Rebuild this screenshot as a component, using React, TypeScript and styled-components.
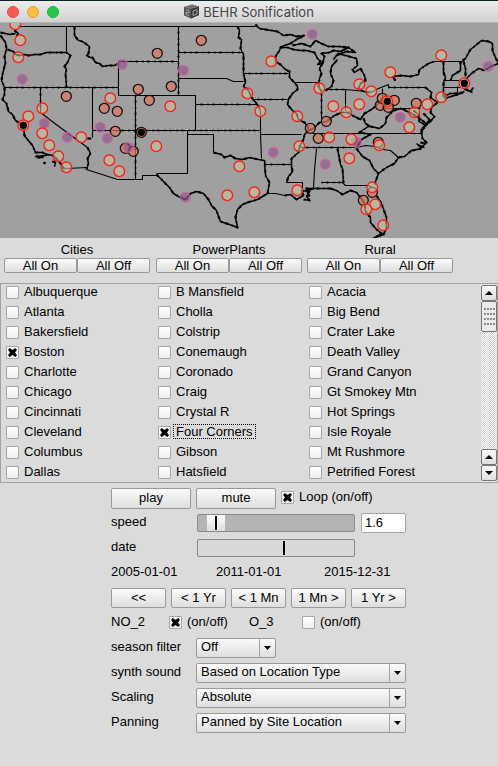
import React, { useState } from "react";
import styled, { createGlobalStyle, css } from "styled-components";

const GlobalStyle = createGlobalStyle`
  * { box-sizing: border-box; }
  body {
    margin: 0;
    background: #dbdbdb;
    color: #000;
    font: 13px/17px "Liberation Sans", Arial, sans-serif;
  }
  button, input, select { font: inherit; color: inherit; margin: 0; padding: 0; }
`;

const raised = css`
  border: 1px solid #999;
  border-radius: 2px;
  background: linear-gradient(#fbfbfb, #dedede);
`;

const Window = styled.main`
  min-height: 100vh;
  background: #dbdbdb;
`;

const TitleBar = styled.header`
  display: grid;
  grid-template-columns: 1fr auto 1fr;
  align-items: center;
  height: 23px;
  padding: 0 7px;
  background: linear-gradient(#ededed, #d2d2d2);
  border-top: 1px solid #0b2326;
  border-bottom: 1px solid #b4b4b4;
`;

const Lights = styled.div`
  display: flex;
  gap: 8px;
`;

const Light = styled.button<{ $fill: string; $edge: string }>`
  width: 12px;
  height: 12px;
  border: 1px solid ${(p) => p.$edge};
  border-radius: 50%;
  background: ${(p) => p.$fill};
`;

const Title = styled.h1`
  display: flex;
  align-items: center;
  gap: 4px;
  margin: 0;
  font: 13px/20px Inter, "Liberation Sans", sans-serif;
  color: #444;
`;

const MapView = styled.svg`
  display: block;
  width: 100%;
  background: #a0a0a0;
`;

const columns = css`
  display: grid;
  grid-template-columns: 152px 151px 1fr;
`;

const GroupBar = styled.section`
  ${columns}
  padding: 4px 0 10px 4px;
`;

const Group = styled.div`
  width: 146px;
`;

const GroupName = styled.h2`
  margin: 0;
  font-size: 13px;
  font-weight: 400;
  line-height: 16px;
  text-align: center;
`;

const GroupButtons = styled.div`
  display: grid;
  grid-template-columns: 1fr 1fr;
`;

const SmallButton = styled.button`
  ${raised}
  height: 15px;
  line-height: 11px;
  padding-bottom: 1px;
`;

const Panel = styled.section`
  display: flex;
  height: 200px;
  border: 1px solid #a2a2a2;
  overflow: hidden;
`;

const Places = styled.div`
  ${columns}
  flex: 1;
  padding-left: 5px;
`;

const CheckLabel = styled.label`
  display: flex;
  gap: 2px;
  align-items: flex-start;
  height: 20px;
  line-height: 15px;
`;

const CheckText = styled.span<{ $focused?: boolean }>`
  padding: 0 3px;
  white-space: nowrap;
  outline: ${(p) => (p.$focused ? "1px dotted #000" : "none")};
  outline-offset: -1px;
`;

const Tick = styled.input.attrs({ type: "checkbox" })`
  appearance: none;
  display: grid;
  place-items: center;
  flex: none;
  width: 13px;
  height: 13px;
  margin-top: 2px;
  border: 1px solid #a6a6a6;
  border-radius: 1px;
  background: linear-gradient(#fff, #eee);
  &:checked::before {
    content: "";
    width: 9px;
    height: 9px;
    background: #000;
    clip-path: polygon(0 20%, 20% 0, 50% 22%, 80% 0, 100% 20%, 78% 50%, 100% 80%, 80% 100%, 50% 78%, 20% 100%, 0 80%, 22% 50%);
  }
`;

const ScrollBar = styled.div`
  display: flex;
  flex-direction: column;
  width: 16px;
  padding: 1px 0;
  background: repeating-conic-gradient(#fff 0 25%, #d2d2d2 0 50%) 0 0 / 2px 2px;
`;

const ScrollButton = styled.button`
  ${raised}
  display: grid;
  place-items: center;
  height: 16px;
  border-color: #777;
`;

const Grip = styled.div`
  height: 31px;
  margin-bottom: auto;
  padding: 5px 1px 5px 2px;
  border: 1px solid #777;
  border-radius: 2px;
  background: radial-gradient(circle at 1px 1px, #8c8c8c 1px, transparent 1px) 0 1px / 3px 5px content-box, #eaeaea;
`;

const Controls = styled.section`
  display: grid;
  gap: 5px;
  padding: 5px 0 33px 111px;
  max-width: 406px;
`;

const Row = styled.div<{ $cols: string; $gap?: number }>`
  display: grid;
  grid-template-columns: ${(p) => p.$cols};
  column-gap: ${(p) => p.$gap ?? 0}px;
  height: 20px;
`;

const PushButton = styled.button`
  ${raised}
  line-height: 15px;
  padding-bottom: 2px;
`;

const Slider = styled.input.attrs({ type: "range" })<{ $flat?: boolean }>`
  appearance: none;
  width: 158px;
  height: 18px;
  margin: 1px;
  border: 1px solid #8a8a8a;
  border-radius: 2px;
  background: ${(p) => (p.$flat ? "#d8d8d8" : "#b4b4b4")};
  &::-webkit-slider-thumb {
    appearance: none;
    width: ${(p) => (p.$flat ? 2 : 18)}px;
    height: ${(p) => (p.$flat ? 14 : 16)}px;
    background: ${(p) =>
      p.$flat ? "#000" : "linear-gradient(#000, #000) center / 2px 14px no-repeat, linear-gradient(#fff, #dedede)"};
  }
`;

const NumberBox = styled.input`
  width: 100%;
  height: 20px;
  padding: 0 3px 1px;
  border: 1px solid #a6a6a6;
  border-radius: 2px;
  background: #fff;
`;

const Dates = styled.div`
  display: grid;
  grid-template-columns: 105px 108px 1fr;
  height: 20px;
`;

const SelectBox = styled.span`
  position: relative;
  display: block;
  svg {
    position: absolute;
    right: 0;
    top: 0;
    pointer-events: none;
  }
`;

const Select = styled.select`
  ${raised}
  appearance: none;
  display: block;
  width: 100%;
  height: 20px;
  padding: 0 18px 2px 4px;
  line-height: 16px;
`;

type Pt = [number, number];

const thinLines = [
  "M17 26H255", "M66 26V52", "M40 87V112L57 125L87 147", "M118 61V95H195V130", "M92 87V137", "M135 95V179",
  "M65 168L87 167", "M86 169L117 179H142V175H156", "M156 173H187V130", "M187 134H213V152", "M195 104H257", "M178 26V95",
  "M178 52H242", "M178 78H226L233 81H243", "M260 110V134L261 158", "M260 134H301", "M265 164H290", "M286 182H302V188",
  "M316 148L314 170L313 188", "M300 147H356", "M312 133H421", "M321 182H342L345 185H368L371 187", "M294 82H319",
  "M252 99H287", "M321 92V118", "M326 89H345L365 91", "M345 89V110", "M382 88V108H420", "M388 84V87",
  "M434 61H462", "M443 80H462", "M443 87H460", "M457 86V94", "M356 147L365 145L375 146L382 149L390 150L398 157",
  "M92 130H259", "M268 193L275 193L284 195", "M370 92L378 88L388 84",
  "M4 87H118", "M118 61H178", "M243 73H288", "M388 87H425",
];

const dottedLines = ["M4 87H118", "M118 61H178", "M178 26V95", "M135 95V178", "M178 52H242", "M243 73H288", "M388 87H425", "M92 130H259", "M301 147H355", "M252 99H287", "M40 88V112", "M321 182H343", "M265 164H290", "M330 89H345", "M195 104H257", "M321 94V118"];

const thickLines = [
  "M0 35L5 42L6 48L4 56L5 62L2 74L1 80L4 87L4 94L2 99L6 103L8 111L12 114L15 120L20 123L23 127L24 135L27 139L32 145L35 152L42 152L46 154L53 155L60 163L64 169",
  "M0 32L5 33L9 34L15 33M14 30L18 33L16 35",
  "M7 49L13 51L15 54L19 55L24 54L28 55L34 54L40 54L46 52L66 52L70 55L67 62L64 66L66 69L65 73L66 87",
  "M74 26V35L78 40L82 41L89 46L88 53L86 55L90 57L92 57L95 62L99 63L102 66L108 65L114 65L118 63",
  "M87 138L91 138M87 147L90 153L87 158L88 163L86 169",
  "M156 174L160 178L165 183L169 187L173 193L178 196L185 199L190 193L196 191L203 193L208 199L211 205L216 210L218 216L220 221L229 224L237 227L235 217L237 209L242 204L247 202L257 199L267 193L269 182L265 175L264 160",
  "M213 152L221 154L224 157L230 155L235 158L242 159L249 157L258 159L264 160",
  "M237 26L239 30L238 37L241 39L240 48L243 54L243 73L245 82L243 86L248 90L251 97L257 104L260 110",
  "M255 24L259 28L265 29L271 30L277 31L283 35L290 34L296 36L304 35L296 39L290 43L284 45L280 47L279 50L275 56L275 61L280 64L285 69L289 71L289 77L294 82L297 86L297 89L292 93L288 99L287 104L292 110L296 113L298 119L304 122L308 127L307 131L304 134L303 139L299 146L298 152L291 158L291 166L292 171L288 176L286 182",
  "M280 47L287 47L293 49L300 50L306 50L314 52L317 58L320 61L317 64L322 63L324 56L321 53L329 52L333 50L340 51L348 47L355 52L346 51L336 55L333 59",
  "M292 45L301 43L310 46L315 40L321 43L328 46L338 46L349 47",
  "M322 63L319 68L321 73L319 78L318 86L321 91M325 90L331 86L333 80L330 73L331 66L337 59M337 53L345 55L356 58L357 65L352 69L354 72L360 68L364 75L365 80L360 83L358 88L363 91L370 92",
  "M395 80L392 76L401 75L410 76L418 74L419 69L428 63L434 61",
  "M425 87L431 92L430 97L437 102L431 107L430 112L434 116L428 123",
  "M443 61V72L445 77L443 83V96M460 61L460 70L452 75L450 80M463 61L465 68V76",
  "M462 60L465 58L470 49L475 45L481 40L488 41L492 43L492 50L495 57L498 63L490 66L484 70L478 68L471 73L467 77L465 83L465 89L470 91L473 87",
  "M443 96L450 93L458 93L464 91M444 98L454 95L463 92",
  "M308 130L313 128L319 122L326 121L334 115L341 112L348 112L352 115L360 119L364 113L371 109L376 105L382 98",
  "M363 118L365 123L370 126L379 128L385 123L386 117L393 110L401 108L409 112L416 116L422 120L427 125",
  "M371 134L359 132L369 125M357 146L361 139L370 134",
  "M413 110L418 114L419 121L425 125L420 130M423 113L429 119L426 124L421 131L422 138L426 142L421 147L416 143M412 150L421 148",
  "M421 148L411 150L404 156L398 157L394 163L386 167L378 173L374 184",
  "M356 148L362 156L369 160L373 168L378 173M337 148L340 164L342 168L343 182",
  "M330 188L336 190L342 194L350 190L356 192L360 197L364 203L365 211L370 217L370 222L376 229L381 233L373 238L383 234L386 228L386 217L381 203L376 195",
  "M284 195L290 194L296 199L303 195L301 190L309 191L306 196L309 200L303 199M305 188L309 188L322 188L330 188M313 188L306 190L309 196",
  "M35 156L46 155M37 157H43M43 162L45 163M52 161L55 162L54 166M420 142L426 143M418 145L424 147M464 88L472 92",
];

const cities: Pt[] = [
  [15, 24], [20, 40], [18, 57], [42, 108], [28, 116], [23, 125], [42, 133], [49, 145], [58, 156], [66, 167], [81, 137],
  [110, 98], [109, 160], [119, 171], [156, 146], [170, 106], [239, 166], [227, 195], [254, 192], [297, 190], [299, 146],
  [271, 61], [247, 93], [260, 111], [297, 116], [319, 88], [333, 106], [329, 137], [346, 112], [359, 84], [359, 104],
  [371, 91], [390, 72], [441, 55], [441, 97], [464, 83], [427, 104], [414, 112], [409, 127], [351, 139], [379, 145],
  [349, 158], [372, 187], [375, 204], [366, 209], [383, 225], [387, 101],
];

const plants: Pt[] = [
  [157, 53], [66, 96], [138, 89], [149, 100], [104, 108], [117, 111], [171, 86], [201, 40], [115, 131], [125, 148],
  [133, 151], [326, 121], [310, 128], [318, 138], [380, 105], [382, 98], [394, 100], [388, 107], [416, 103], [378, 142],
  [372, 192], [363, 200], [141, 132],
];

const rural: Pt[] = [
  [22, 79], [122, 64], [44, 123], [67, 137], [100, 127], [107, 138], [128, 147], [183, 70], [185, 197], [273, 152],
  [325, 164], [312, 34], [488, 66], [400, 117], [356, 142],
];

const active: Pt[] = [[23, 125], [464, 83], [387, 101], [141, 132]];

const Dots = ({ at, r, fill, stroke }: { at: Pt[]; r: number; fill: string; stroke: string }) => (
  <g fill={fill} stroke={stroke} strokeWidth="1.3">
    {at.map(([x, y]) => (
      <circle key={`${x}-${y}`} cx={x + 0.3} cy={y + 0.3} r={r} />
    ))}
  </g>
);

const SiteMap = () => (
  <MapView viewBox="0 23 498 215" role="img" aria-label="Map of sites">
    <g fill="none" stroke="#000" strokeLinejoin="round" transform="translate(.5 .5)">
      <path d={thinLines.join("")} strokeWidth="1.1" />
      <path d={dottedLines.join("")} strokeWidth="2" strokeDasharray="1 4 2 5" />
      <path d={thickLines.join("")} strokeWidth="1.5" />
      <path d={thickLines.join("")} strokeWidth="2.2" strokeDasharray="3 4 1 3" />
    </g>
    <Dots at={plants} r={5} fill="rgba(222,120,98,.68)" stroke="#1a0d0a" />
    <Dots at={rural} r={5} fill="rgba(142,88,146,.68)" stroke="rgba(214,98,152,.8)" />
    <Dots at={cities} r={5.3} fill="rgba(205,198,160,.55)" stroke="#fb1e14" />
    <Dots at={active} r={3} fill="#000" stroke="#000" />
  </MapView>
);

const CubeIcon = () => (
  <svg width="15" height="15" viewBox="0 0 15 15" aria-hidden="true">
    <path d="M0 3L8 .5L15 2.500V11L7 14.500L0 11.500Z" fill="#555" />
    <path d="M0 3L8 .5L15 2.500L7 5Z" fill="#858585" />
    <path d="M7 5L15 2.500V11L7 14.500Z" fill="#3a3a3a" />
    <path d="M2 5.500L5 6.500V9L2 8V10.500L5 11.500M9 7L13 5.500V10L9 11.500Z" fill="none" stroke="#a5a5a5" />
    <path d="M4 3L10 2.500" stroke="#555" />
  </svg>
);

const Arrow = ({ up }: { up?: boolean }) => (
  <svg width="8" height="4" viewBox="0 0 8 4" aria-hidden="true">
    <path d={up ? "M0 4L4 0L8 4Z" : "M0 0H8L4 4Z"} />
  </svg>
);

const Check = ({ label, initial = false, focused }: { label: string; initial?: boolean; focused?: boolean }) => {
  const [on, setOn] = useState(initial);
  return (
    <CheckLabel>
      <Tick checked={on} onChange={() => setOn(!on)} />
      <CheckText $focused={focused}>{label}</CheckText>
    </CheckLabel>
  );
};

const Toggle = styled.div`
  padding-top: 1px;
`;

const Choice = ({ id, options }: { id: string; options: string[] }) => (
  <SelectBox>
    <Select id={id} defaultValue={options[0]}>
      {options.map((o) => (
        <option key={o}>{o}</option>
      ))}
    </Select>
    <svg width="17" height="20" viewBox="0 0 17 20" aria-hidden="true">
      <path d="M.5 1V19" stroke="#a2a2a2" />
      <path d="M5 8H12L8.500 12Z" />
    </svg>
  </SelectBox>
);

const groups = [
  { name: "Cities", places: ["Albuquerque", "Atlanta", "Bakersfield", "Boston", "Charlotte", "Chicago", "Cincinnati", "Cleveland", "Columbus", "Dallas"] },
  { name: "PowerPlants", places: ["B Mansfield", "Cholla", "Colstrip", "Conemaugh", "Coronado", "Craig", "Crystal R", "Four Corners", "Gibson", "Hatsfield"] },
  { name: "Rural", places: ["Acacia", "Big Bend", "Crater Lake", "Death Valley", "Grand Canyon", "Gt Smokey Mtn", "Hot Springs", "Isle Royale", "Mt Rushmore", "Petrified Forest"] },
];

const choices = [
  { id: "synth", label: "synth sound", options: ["Based on Location Type"] },
  { id: "scaling", label: "Scaling", options: ["Absolute"] },
  { id: "panning", label: "Panning", options: ["Panned by Site Location"] },
];

export default function App() {
  return (
    <Window>
      <GlobalStyle />
      <TitleBar>
        <Lights>
          <Light $fill="#fc5b57" $edge="#e24a45" aria-label="Close" />
          <Light $fill="#fdbe41" $edge="#e0a033" aria-label="Minimize" />
          <Light $fill="#27c84a" $edge="#1fac37" aria-label="Zoom" />
        </Lights>
        <Title>
          <CubeIcon />
          BEHR Sonification
        </Title>
      </TitleBar>
      <SiteMap />
      <GroupBar>
        {groups.map((g) => (
          <Group key={g.name}>
            <GroupName>{g.name}</GroupName>
            <GroupButtons>
              <SmallButton>All On</SmallButton>
              <SmallButton>All Off</SmallButton>
            </GroupButtons>
          </Group>
        ))}
      </GroupBar>
      <Panel>
        <Places>
          {groups.map((g) => (
            <div key={g.name}>
              {g.places.map((p) => (
                <Check key={p} label={p} initial={p === "Boston" || p === "Four Corners"} focused={p === "Four Corners"} />
              ))}
            </div>
          ))}
        </Places>
        <ScrollBar>
          <ScrollButton aria-label="Scroll up"><Arrow up /></ScrollButton>
          <Grip />
          <ScrollButton aria-label="Page up"><Arrow up /></ScrollButton>
          <ScrollButton aria-label="Scroll down"><Arrow /></ScrollButton>
        </ScrollBar>
      </Panel>
      <Controls>
        <Row $cols="80px 80px 1fr" $gap={5}>
          <PushButton>play</PushButton>
          <PushButton>mute</PushButton>
          <Toggle><Check label="Loop (on/off)" initial /></Toggle>
        </Row>
        <Row $cols="85px 1fr 45px">
          <label htmlFor="speed">speed</label>
          <Slider id="speed" min={0} max={100} step={0.5} defaultValue={6.5} />
          <NumberBox aria-label="speed value" defaultValue="1.6" />
        </Row>
        <Row $cols="85px 1fr">
          <label htmlFor="date">date</label>
          <Slider id="date" $flat min={0} max={100} defaultValue={55} />
        </Row>
        <Dates>
          <span>2005-01-01</span>
          <span>2011-01-01</span>
          <span>2015-12-31</span>
        </Dates>
        <Row $cols="repeat(5, 1fr)" $gap={5}>
          {["<<", "< 1 Yr", "< 1 Mn", "1 Mn >", "1 Yr >"].map((t) => (
            <PushButton key={t}>{t}</PushButton>
          ))}
        </Row>
        <Row $cols="58px 80px 53px 1fr">
          <span>NO_2</span>
          <Toggle><Check label="(on/off)" initial /></Toggle>
          <span>O_3</span>
          <Toggle><Check label="(on/off)" /></Toggle>
        </Row>
        <Row $cols="85px 80px">
          <label htmlFor="season">season filter</label>
          <Choice id="season" options={["Off"]} />
        </Row>
        {choices.map((c) => (
          <Row key={c.id} $cols="85px 1fr">
            <label htmlFor={c.id}>{c.label}</label>
            <Choice id={c.id} options={c.options} />
          </Row>
        ))}
      </Controls>
    </Window>
  );
}
